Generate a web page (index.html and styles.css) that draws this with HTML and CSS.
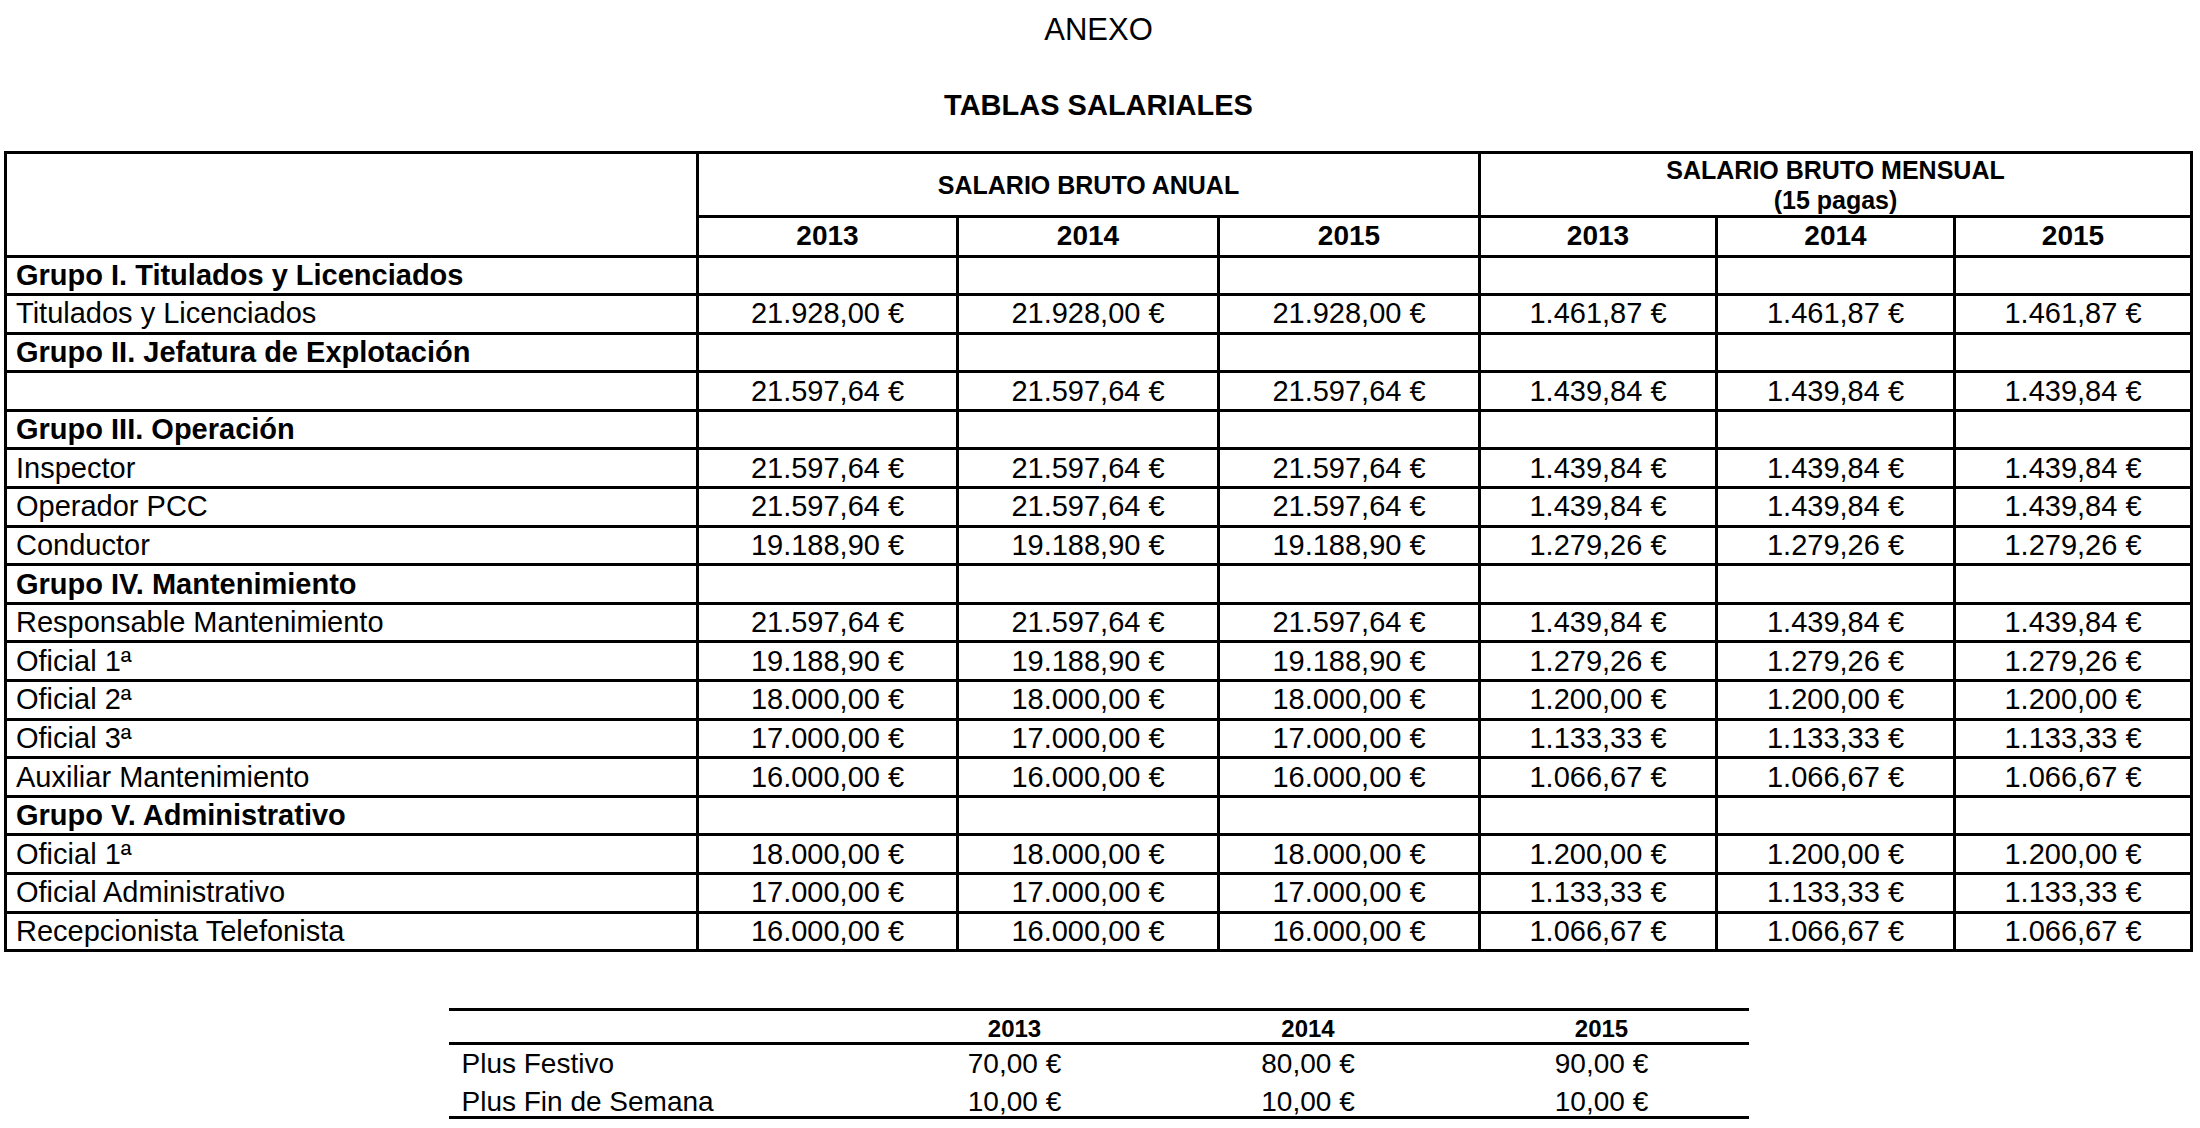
FILE: index.html
```html
<!DOCTYPE html>
<html lang="es">
<head>
<meta charset="utf-8">
<title>Anexo - Tablas salariales</title>
<link rel="stylesheet" href="styles.css">
</head>
<body>
<div class="page">
  <h1 class="title">ANEXO</h1>
  <h2 class="subtitle">TABLAS SALARIALES</h2>

  <div class="salary" role="table">
    <div class="c corner"></div>
    <div class="c hd span3">SALARIO BRUTO ANUAL</div>
    <div class="c hd span3"><span>SALARIO BRUTO MENSUAL</span><span>(15 pagas)</span></div>
    <div class="c yr">2013</div><div class="c yr">2014</div><div class="c yr">2015</div>
    <div class="c yr">2013</div><div class="c yr">2014</div><div class="c yr">2015</div>

    <div class="c label group">Grupo I. Titulados y Licenciados</div>
    <div class="c"></div><div class="c"></div><div class="c"></div><div class="c"></div><div class="c"></div><div class="c"></div>
    <div class="c label">Titulados y Licenciados</div>
    <div class="c">21.928,00 €</div><div class="c">21.928,00 €</div><div class="c">21.928,00 €</div>
    <div class="c">1.461,87 €</div><div class="c">1.461,87 €</div><div class="c">1.461,87 €</div>

    <div class="c label group">Grupo II. Jefatura de Explotación</div>
    <div class="c"></div><div class="c"></div><div class="c"></div><div class="c"></div><div class="c"></div><div class="c"></div>
    <div class="c label"></div>
    <div class="c">21.597,64 €</div><div class="c">21.597,64 €</div><div class="c">21.597,64 €</div>
    <div class="c">1.439,84 €</div><div class="c">1.439,84 €</div><div class="c">1.439,84 €</div>

    <div class="c label group">Grupo III. Operación</div>
    <div class="c"></div><div class="c"></div><div class="c"></div><div class="c"></div><div class="c"></div><div class="c"></div>
    <div class="c label">Inspector</div>
    <div class="c">21.597,64 €</div><div class="c">21.597,64 €</div><div class="c">21.597,64 €</div>
    <div class="c">1.439,84 €</div><div class="c">1.439,84 €</div><div class="c">1.439,84 €</div>
    <div class="c label">Operador PCC</div>
    <div class="c">21.597,64 €</div><div class="c">21.597,64 €</div><div class="c">21.597,64 €</div>
    <div class="c">1.439,84 €</div><div class="c">1.439,84 €</div><div class="c">1.439,84 €</div>
    <div class="c label">Conductor</div>
    <div class="c">19.188,90 €</div><div class="c">19.188,90 €</div><div class="c">19.188,90 €</div>
    <div class="c">1.279,26 €</div><div class="c">1.279,26 €</div><div class="c">1.279,26 €</div>

    <div class="c label group">Grupo IV. Mantenimiento</div>
    <div class="c"></div><div class="c"></div><div class="c"></div><div class="c"></div><div class="c"></div><div class="c"></div>
    <div class="c label">Responsable Mantenimiento</div>
    <div class="c">21.597,64 €</div><div class="c">21.597,64 €</div><div class="c">21.597,64 €</div>
    <div class="c">1.439,84 €</div><div class="c">1.439,84 €</div><div class="c">1.439,84 €</div>
    <div class="c label">Oficial 1ª</div>
    <div class="c">19.188,90 €</div><div class="c">19.188,90 €</div><div class="c">19.188,90 €</div>
    <div class="c">1.279,26 €</div><div class="c">1.279,26 €</div><div class="c">1.279,26 €</div>
    <div class="c label">Oficial 2ª</div>
    <div class="c">18.000,00 €</div><div class="c">18.000,00 €</div><div class="c">18.000,00 €</div>
    <div class="c">1.200,00 €</div><div class="c">1.200,00 €</div><div class="c">1.200,00 €</div>
    <div class="c label">Oficial 3ª</div>
    <div class="c">17.000,00 €</div><div class="c">17.000,00 €</div><div class="c">17.000,00 €</div>
    <div class="c">1.133,33 €</div><div class="c">1.133,33 €</div><div class="c">1.133,33 €</div>
    <div class="c label">Auxiliar Mantenimiento</div>
    <div class="c">16.000,00 €</div><div class="c">16.000,00 €</div><div class="c">16.000,00 €</div>
    <div class="c">1.066,67 €</div><div class="c">1.066,67 €</div><div class="c">1.066,67 €</div>

    <div class="c label group">Grupo V. Administrativo</div>
    <div class="c"></div><div class="c"></div><div class="c"></div><div class="c"></div><div class="c"></div><div class="c"></div>
    <div class="c label">Oficial 1ª</div>
    <div class="c">18.000,00 €</div><div class="c">18.000,00 €</div><div class="c">18.000,00 €</div>
    <div class="c">1.200,00 €</div><div class="c">1.200,00 €</div><div class="c">1.200,00 €</div>
    <div class="c label">Oficial Administrativo</div>
    <div class="c">17.000,00 €</div><div class="c">17.000,00 €</div><div class="c">17.000,00 €</div>
    <div class="c">1.133,33 €</div><div class="c">1.133,33 €</div><div class="c">1.133,33 €</div>
    <div class="c label">Recepcionista Telefonista</div>
    <div class="c">16.000,00 €</div><div class="c">16.000,00 €</div><div class="c">16.000,00 €</div>
    <div class="c">1.066,67 €</div><div class="c">1.066,67 €</div><div class="c">1.066,67 €</div>
  </div>

  <div class="extra" role="table">
    <div class="e head"></div>
    <div class="e head eyr">2013</div>
    <div class="e head eyr">2014</div>
    <div class="e head eyr">2015</div>

    <div class="e lbl">Plus Festivo</div>
    <div class="e">70,00 €</div>
    <div class="e">80,00 €</div>
    <div class="e">90,00 €</div>

    <div class="e lbl low">Plus Fin de Semana</div>
    <div class="e low">10,00 €</div>
    <div class="e low">10,00 €</div>
    <div class="e low">10,00 €</div>
  </div>
</div>
</body>
</html>
```
FILE: styles.css
```css
html, body {
  margin: 0;
  padding: 0;
  background: #ffffff;
  color: #000000;
  font-family: "Liberation Sans", Arial, Helvetica, sans-serif;
}

.page {
  width: 2189px;
  margin-left: 4px;
}

.title {
  margin: 14px 0 0;
  font-size: 31px;
  line-height: 31px;
  font-weight: 400;
  text-align: center;
}

.subtitle {
  margin: 46px 0 0;
  font-size: 29px;
  line-height: 29px;
  font-weight: 700;
  text-align: center;
}

/* Main salary table */
.salary {
  margin-top: 31px;
  display: grid;
  grid-template-columns: 692px 260px 261px 261px 237px 238px 237px;
  grid-template-rows: 64px 39.5px repeat(18, 38.6px);
  border-top: 3px solid #000;
  border-left: 3px solid #000;
}

.c {
  display: flex;
  align-items: center;
  justify-content: center;
  border-right: 3px solid #000;
  border-bottom: 3px solid #000;
  font-size: 29px;
  line-height: 1;
  white-space: nowrap;
}

.label {
  justify-content: flex-start;
  padding-left: 9px;
}

.group {
  font-weight: 700;
}

.corner {
  grid-row: span 2;
}

.span3 {
  grid-column: span 3;
}

.hd {
  flex-direction: column;
  font-size: 25px;
  line-height: 30px;
  font-weight: 700;
  text-align: center;
}

.yr {
  font-size: 28px;
  font-weight: 700;
}

/* Plus table */
.extra {
  margin: 56px auto 0;
  width: 1300px;
  display: grid;
  grid-template-columns: 419px 294px 293px 294px;
  grid-template-rows: 34px 38px 33px;
  border-top: 3px solid #000;
  border-bottom: 3px solid #000;
}

.e {
  display: flex;
  align-items: center;
  justify-content: center;
  font-size: 28px;
  line-height: 1;
  white-space: nowrap;
}

.head {
  border-bottom: 3px solid #000;
  padding-top: 4px;
}

.eyr {
  font-size: 24px;
  font-weight: 700;
}

.lbl {
  justify-content: flex-start;
  padding-left: 13px;
}

.low {
  padding-top: 4px;
}
```
